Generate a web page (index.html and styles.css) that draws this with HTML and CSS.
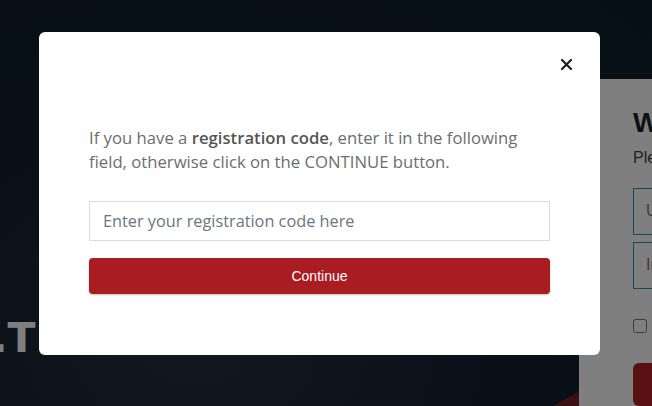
FILE: index.html
```html
<!DOCTYPE html>
<html lang="en">
<head>
    <meta charset="UTF-8">
    <meta name="viewport" content="width=device-width, initial-scale=1.0">
    <title>Registration</title>
    <link rel="stylesheet" href="styles.css">
</head>
<body>

    <div class="page">
        <!-- Hero kiri -->
        <section class="hero">
            <h1 class="hero-title">.T TALKS</h1>
        </section>

        <!-- Kartu login -->
        <aside class="login-card">
            <h2 class="login-title">Welcome</h2>
            <p class="login-sub">Please sign in to continue</p>
            <input class="login-field" type="text" placeholder="Username">
            <input class="login-field" type="password" placeholder="Insert password">
            <label class="remember"><input type="checkbox"> Remember me</label>
            <button class="login-btn">Sign in</button>
        </aside>
    </div>

    <!-- Popup kode registrasi -->
    <div class="overlay">
        <div class="modal">
            <div class="modal-header">
                <button class="modal-close" aria-label="Close">
                    <svg width="11" height="11" viewBox="0 0 11 11">
                        <path d="M1 1 L10 10 M10 1 L1 10" stroke="#1f1f1f" stroke-width="2.2" stroke-linecap="square"/>
                    </svg>
                </button>
            </div>
            <div class="modal-body">
                <p class="modal-text">If you have a <strong>registration code</strong>, enter it in the following field, otherwise click on the CONTINUE button.</p>
                <input class="code-input" type="text" placeholder="Enter your registration code here">
                <button class="continue-btn">Continue</button>
            </div>
        </div>
    </div>

</body>
</html>
```

FILE: styles.css
```css
* {
    box-sizing: border-box;
}

body {
    margin: 0;
    height: 100vh;
    overflow: hidden;
    font-family: 'Liberation Sans', Arial, sans-serif;
    background: radial-gradient(ellipse at 30% 85%, #22313f 0%, #132130 45%, #0d1e2e 100%);
}

.page {
    display: flex;
    height: 100vh;
}

.hero {
    flex: 0 0 579px;
    padding-top: 317px;
    background: linear-gradient(150deg, transparent 98%, #74202a 98%);
}

.hero-title {
    margin: 0 0 0 -8px;
    font-family: 'DejaVu Sans', sans-serif;
    font-size: 41px;
    line-height: 42px;
    font-weight: bold;
    color: #ffffff;
    white-space: nowrap;
}

.login-card {
    flex: 0 0 360px;
    margin-top: 79px;
    padding: 28px 0 0 54px;
    background: #ffffff;
    display: flex;
    flex-direction: column;
    align-items: flex-start;
}

.login-title {
    margin: 0;
    font-size: 28px;
    line-height: 32px;
    font-weight: bold;
    color: #222;
}

.login-sub {
    margin: 9px 0 0;
    font-size: 16px;
    line-height: 20px;
    color: #444;
}

.login-field {
    width: 280px;
    height: 48px;
    margin-top: 20px;
    padding: 0 12px;
    border: 1px solid #1aa394;
    font-size: 16px;
    font-family: inherit;
}

.login-field + .login-field {
    margin-top: 7px;
}

.remember {
    display: flex;
    align-items: center;
    gap: 8px;
    margin-top: 29px;
    font-size: 14px;
    color: #444;
}

.remember input {
    width: 14px;
    height: 14px;
    margin: 0;
}

.login-btn {
    width: 280px;
    height: 44px;
    margin-top: 29px;
    border: none;
    border-radius: 6px;
    background: #b41f25;
    color: white;
    font-size: 16px;
}

.overlay {
    position: fixed;
    top: 0;
    left: 0;
    width: 100%;
    height: 100%;
    background: rgba(0, 0, 0, 0.5);
    z-index: 1000;
}

.modal {
    width: 561px;
    margin: 32px 0 0 39px;
    padding: 20px 22px 61px 50px;
    background: #ffffff;
    border-radius: 6px;
}

.modal-header {
    display: flex;
    justify-content: flex-end;
}

.modal-close {
    width: 24px;
    height: 24px;
    padding: 0;
    border: none;
    background: none;
    display: flex;
    justify-content: center;
    align-items: center;
    cursor: pointer;
}

.modal-body {
    width: 461px;
    padding-top: 50px;
}

.modal-text {
    margin: 0;
    padding-right: 10px;
    font-family: 'Open Sans', sans-serif;
    font-size: 16.7px;
    line-height: 24px;
    color: #6d6d6d;
}

.modal-text strong {
    font-weight: 600;
    color: #555;
}

.code-input {
    display: block;
    width: 100%;
    height: 40px;
    margin-top: 27px;
    padding: 0 13px;
    border: 1px solid #dcdcdc;
    font-family: 'Open Sans', sans-serif;
    font-size: 16.3px;
    color: #333;
}

.code-input::placeholder {
    color: #6c757d;
}

.continue-btn {
    display: block;
    width: 100%;
    height: 36px;
    margin-top: 17px;
    border: none;
    border-radius: 4px;
    background: #a91c22;
    color: white;
    font-family: 'Liberation Sans', Arial, sans-serif;
    font-size: 14px;
    box-shadow: 0 1px 2px rgba(0, 0, 0, 0.25);
    cursor: pointer;
}
```
